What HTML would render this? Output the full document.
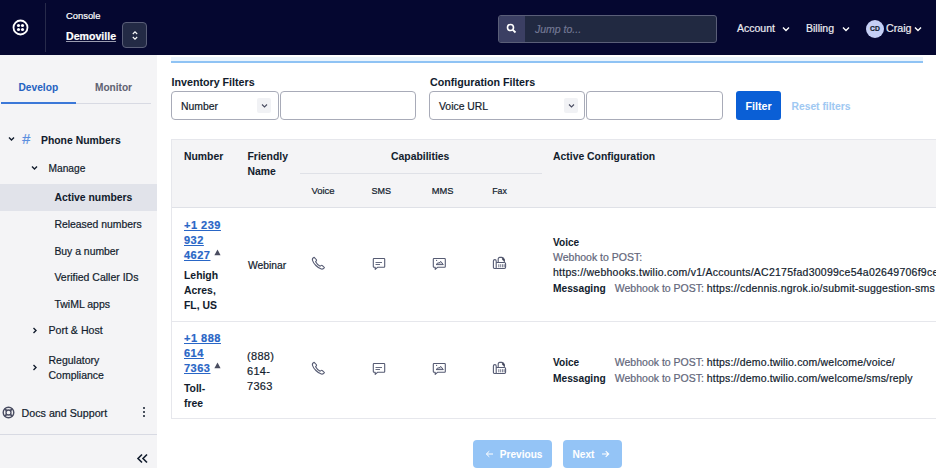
<!DOCTYPE html>
<html><head><meta charset="utf-8">
<style>
*{box-sizing:border-box;margin:0;padding:0}
html,body{width:936px;height:468px;overflow:hidden;background:#fff;font-family:"Liberation Sans",sans-serif;color:#121c2d}
.a{-webkit-text-stroke:0.2px currentColor}
.b{-webkit-text-stroke:0.05px currentColor}
.a{position:absolute;white-space:nowrap}
#hdr{position:absolute;left:0;top:0;width:936px;height:55px;background:#050730}
#side{position:absolute;left:0;top:55px;width:157px;height:413px;background:#f4f4f6}
.t{font-size:10.4px;line-height:15px}
.b{font-weight:bold}
.lk{color:#2966c6;text-decoration:underline;font-weight:bold}
.g{color:#62667a}
</style></head><body>
<div id="hdr">
  <!-- logo -->
  <svg class="a" style="left:11.5px;top:19px" width="17" height="17" viewBox="0 0 17 17">
    <circle cx="8.5" cy="8.5" r="7" fill="none" stroke="#fff" stroke-width="1.8"/>
    <circle cx="6.5" cy="6.5" r="1.55" fill="#fff"/><circle cx="10.5" cy="6.5" r="1.55" fill="#fff"/>
    <circle cx="6.5" cy="10.5" r="1.55" fill="#fff"/><circle cx="10.5" cy="10.5" r="1.55" fill="#fff"/>
  </svg>
  <div class="a" style="left:45px;top:3px;width:1px;height:49px;background:#272a4a"></div>
  <div class="a" style="left:66px;top:9.7px;font-size:9.4px;color:#fff">Console</div>
  <div class="a" style="left:66px;top:29.5px;font-size:10.6px;font-weight:bold;color:#fff;text-decoration:underline;text-decoration-color:#9a9cb0">Demoville</div>
  <div class="a" style="left:122px;top:22px;width:25px;height:26px;border:1px solid #5a5e78;border-radius:4px;background:#232a45"></div>
  <svg class="a" style="left:129.5px;top:28.5px" width="10" height="13" viewBox="0 0 10 13"><path d="M2.8 5 L5 2.8 L7.2 5 M2.8 8 L5 10.2 L7.2 8" fill="none" stroke="#fff" stroke-width="1.1"/></svg>
  <!-- search -->
  <div class="a" style="left:498px;top:15px;width:219px;height:28px;border:1px solid #5a5e78;border-radius:3px;background:#212941"></div>
  <div class="a" style="left:499px;top:16px;width:26px;height:26px;background:#3b3f63;border-radius:2px 0 0 2px"></div>
  <svg class="a" style="left:506px;top:23px" width="11" height="11" viewBox="0 0 11 11"><circle cx="4.5" cy="4.5" r="3" fill="none" stroke="#fff" stroke-width="1.6"/><path d="M6.8 6.8 L9.5 9.5" stroke="#fff" stroke-width="1.8"/></svg>
  <div class="a" style="left:535px;top:23px;font-size:10.5px;font-style:italic;color:#737894">Jump to...</div>
  <div class="a" style="left:737px;top:22px;font-size:10.5px;color:#ececf2">Account</div>
  <svg class="a" style="left:782px;top:26px" width="8" height="6" viewBox="0 0 8 6"><path d="M1 1.5 L4 4.5 L7 1.5" fill="none" stroke="#fff" stroke-width="1.4"/></svg>
  <div class="a" style="left:806px;top:22px;font-size:10.5px;color:#ececf2">Billing</div>
  <svg class="a" style="left:842px;top:26px" width="8" height="6" viewBox="0 0 8 6"><path d="M1 1.5 L4 4.5 L7 1.5" fill="none" stroke="#fff" stroke-width="1.4"/></svg>
  <div class="a" style="left:866px;top:19.5px;width:18px;height:18px;border-radius:50%;background:#c5cff5;color:#121c2d;font-size:6.8px;font-weight:bold;text-align:center;line-height:18px">CD</div>
  <div class="a" style="left:886px;top:22px;font-size:10.7px;color:#ececf2">Craig</div>
  <svg class="a" style="left:914px;top:26px" width="8" height="6" viewBox="0 0 8 6"><path d="M1 1.5 L4 4.5 L7 1.5" fill="none" stroke="#fff" stroke-width="1.4"/></svg>
</div>

<div id="side">
  <div class="a b" style="left:18.5px;top:26.5px;font-size:10.2px;color:#2563c2">Develop</div>
  <div class="a b" style="left:95px;top:26.5px;font-size:10.1px;color:#5f6272">Monitor</div>
  <div class="a" style="left:1px;top:47px;width:75px;height:2px;background:#3b78d8"></div>
  <div class="a" style="left:76px;top:48px;width:75px;height:1px;background:#d8dae3"></div>
  <svg class="a" style="left:8px;top:81px" width="7" height="6" viewBox="0 0 7 6"><path d="M1 1.5 L3.5 4 L6 1.5" fill="none" stroke="#121c2d" stroke-width="1.4"/></svg>
  <div class="a" style="left:22px;top:75.5px;font-size:14.5px;color:#5b8fe0;font-style:italic">#</div>
  <div class="a b t" style="left:41px;top:78px;font-size:10.4px">Phone Numbers</div>
  <svg class="a" style="left:31px;top:110px" width="7" height="6" viewBox="0 0 7 6"><path d="M1 1.5 L3.5 4 L6 1.5" fill="none" stroke="#121c2d" stroke-width="1.4"/></svg>
  <div class="a t" style="left:48.5px;top:106px;font-size:10.2px">Manage</div>
  <div class="a" style="left:0;top:128.5px;width:157px;height:27px;background:#e1e3ea"></div>
  <div class="a b t" style="left:54.4px;top:135px;font-size:10.4px">Active numbers</div>
  <div class="a t" style="left:54.4px;top:162px;font-size:10.4px">Released numbers</div>
  <div class="a t" style="left:54.4px;top:188.5px;font-size:10.4px">Buy a number</div>
  <div class="a t" style="left:54.4px;top:215px;font-size:10.5px">Verified Caller IDs</div>
  <div class="a t" style="left:54.4px;top:242px;font-size:10.5px">TwiML apps</div>
  <svg class="a" style="left:32px;top:272px" width="6" height="7" viewBox="0 0 6 7"><path d="M1.5 1 L4 3.5 L1.5 6" fill="none" stroke="#121c2d" stroke-width="1.4"/></svg>
  <div class="a t" style="left:48.5px;top:268px;font-size:10.6px">Port &amp; Host</div>
  <svg class="a" style="left:32px;top:309px" width="6" height="7" viewBox="0 0 6 7"><path d="M1.5 1 L4 3.5 L1.5 6" fill="none" stroke="#121c2d" stroke-width="1.4"/></svg>
  <div class="a t" style="left:48.5px;top:297.5px;font-size:10.5px;white-space:normal;width:70px">Regulatory<br>Compliance</div>
  <svg class="a" style="left:2px;top:351px" width="13" height="13" viewBox="0 0 13 13"><circle cx="6.5" cy="6.5" r="5.3" fill="none" stroke="#4a4d62" stroke-width="1.4"/><circle cx="6.5" cy="6.5" r="2.5" fill="none" stroke="#4a4d62" stroke-width="1.3"/><path d="M2.8 2.8 L4.7 4.7 M10.2 2.8 L8.3 4.7 M2.8 10.2 L4.7 8.3 M10.2 10.2 L8.3 8.3" stroke="#4a4d62" stroke-width="1.8"/></svg>
  <div class="a t" style="left:21.6px;top:350.5px;font-size:10.7px">Docs and Support</div>
  <div class="a" style="left:142.5px;top:352px;width:2px;height:2px;background:#121c2d;border-radius:1px"></div>
  <div class="a" style="left:142.5px;top:356px;width:2px;height:2px;background:#121c2d;border-radius:1px"></div>
  <div class="a" style="left:142.5px;top:360px;width:2px;height:2px;background:#121c2d;border-radius:1px"></div>
  <div class="a" style="left:0;top:379px;width:157px;height:1px;background:#d8dae3"></div>
  <svg class="a" style="left:136px;top:398px" width="13" height="11" viewBox="0 0 13 11"><path d="M6 1.5 L2 5.5 L6 9.5 M11 1.5 L7 5.5 L11 9.5" fill="none" stroke="#121c2d" stroke-width="1.6"/></svg>
</div>

<div id="main">
  <div class="a" style="left:171px;top:57px;width:752px;height:4px;background:#eaf4fd"></div>
  <div class="a" style="left:171px;top:60.5px;width:752px;height:2px;background:#8fc3f4"></div>
  <div class="a b" style="left:171.5px;top:76px;font-size:10.7px">Inventory Filters</div>
  <div class="a" style="left:171px;top:91px;width:108px;height:29px;border:1px solid #a8abb8;border-radius:4px;background:#fff"></div>
  <div class="a t" style="left:181px;top:99px;font-size:10.4px">Number</div>
  <div class="a" style="left:257px;top:98px;width:14px;height:15px;background:#f1f2f5;border-radius:2px"></div>
  <svg class="a" style="left:260.5px;top:102.5px" width="7" height="6" viewBox="0 0 7 6"><path d="M1 1.5 L3.5 4 L6 1.5" fill="none" stroke="#4a4d62" stroke-width="1.1"/></svg>
  <div class="a" style="left:280px;top:91px;width:136px;height:29px;border:1px solid #a8abb8;border-radius:4px;background:#fff"></div>

  <div class="a b" style="left:430px;top:76px;font-size:10.7px">Configuration Filters</div>
  <div class="a" style="left:429px;top:91px;width:156px;height:29px;border:1px solid #a8abb8;border-radius:4px;background:#fff"></div>
  <div class="a t" style="left:439px;top:99px;font-size:10.4px">Voice URL</div>
  <div class="a" style="left:564px;top:98px;width:14px;height:15px;background:#f1f2f5;border-radius:2px"></div>
  <svg class="a" style="left:567.5px;top:102.5px" width="7" height="6" viewBox="0 0 7 6"><path d="M1 1.5 L3.5 4 L6 1.5" fill="none" stroke="#4a4d62" stroke-width="1.1"/></svg>
  <div class="a" style="left:586px;top:91px;width:137px;height:29px;border:1px solid #a8abb8;border-radius:4px;background:#fff"></div>
  <div class="a" style="left:736px;top:91px;width:45px;height:28.5px;border-radius:3px;background:#0a5fd6"></div>
  <div class="a b t" style="left:745.5px;top:99px;font-size:10.7px;color:#fff">Filter</div>
  <div class="a b t" style="left:791.5px;top:99px;font-size:10.3px;color:#9fc9f3">Reset filters</div>

  <!-- table -->
  <div class="a" style="left:171px;top:139px;width:765px;height:280px;border:1px solid #e6e7ec;border-right:none"></div>
  <div class="a" style="left:172px;top:140px;width:764px;height:67px;background:#f4f4f6"></div>
  <div class="a" style="left:172px;top:207px;width:764px;height:1px;background:#dfe1e7"></div>
  <div class="a" style="left:172px;top:321px;width:764px;height:1px;background:#e6e7ec"></div>
  <div class="a b t" style="left:184px;top:149px;font-size:10.4px">Number</div>
  <div class="a b t" style="left:247.5px;top:149px;font-size:10.4px">Friendly<br>Name</div>
  <div class="a b t" style="left:391px;top:149px;font-size:10.4px">Capabilities</div>
  <div class="a" style="left:299.5px;top:173px;width:242px;height:1px;background:#dfe1e7"></div>
  <div class="a t" style="left:311.4px;top:182.8px;font-size:9.5px">Voice</div>
  <div class="a t" style="left:371.4px;top:183.5px;font-size:9px">SMS</div>
  <div class="a t" style="left:431.7px;top:183.5px;font-size:9.3px">MMS</div>
  <div class="a t" style="left:492.2px;top:183.5px;font-size:8.8px">Fax</div>
  <div class="a b t" style="left:553px;top:149px;font-size:10.4px">Active Configuration</div>

  <!-- row 1 -->
  <div class="a t" style="left:184px;top:217.5px;font-size:11px;letter-spacing:0.5px;white-space:normal;width:60px"><span class="lk">+1 239</span><br><span class="lk">932</span><br><span class="lk">4627</span></div>
  <div class="a b t" style="left:184px;top:268px;font-size:10.4px">Lehigh<br>Acres,<br>FL, US</div>
  <div class="a t" style="left:248px;top:258px;font-size:10.3px">Webinar</div>
  <div class="a b t" style="left:553px;top:235px;font-size:10.1px">Voice</div>
  <div class="a t g" style="left:553px;top:250px;font-size:10.5px">Webhook to POST:</div>
  <div class="a t" style="left:553px;top:265px;font-size:10.5px;letter-spacing:0.25px">https://webhooks.twilio.com/v1/Accounts/AC2175fad30099ce54a02649706f9ce</div>
  <div class="a b t" style="left:553px;top:280.5px;font-size:10.2px">Messaging</div>
  <div class="a t" style="left:614.8px;top:280.5px;font-size:10.5px"><span class="g">Webhook to POST:</span> <span style="letter-spacing:0.2px">https://cdennis.ngrok.io/submit-suggestion-sms</span></div>

  <!-- row 2 -->
  <div class="a t" style="left:184px;top:330.5px;font-size:11px;letter-spacing:0.5px;white-space:normal;width:60px"><span class="lk">+1 888</span><br><span class="lk">614</span><br><span class="lk">7363</span></div>
  <div class="a b t" style="left:184px;top:380.5px;font-size:10.4px">Toll-<br>free</div>
  <div class="a t" style="left:247px;top:349px;font-size:11px;letter-spacing:0.3px">(888)<br>614-<br>7363</div>
  <div class="a b t" style="left:553px;top:355px;font-size:10.1px">Voice</div>
  <div class="a t" style="left:614.8px;top:355px;font-size:10.5px"><span class="g">Webhook to POST:</span> <span style="letter-spacing:0.17px">https://demo.twilio.com/welcome/voice/</span></div>
  <div class="a b t" style="left:553px;top:371px;font-size:10.2px">Messaging</div>
  <div class="a t" style="left:614.8px;top:371px;font-size:10.5px"><span class="g">Webhook to POST:</span> <span style="letter-spacing:0.17px">https://demo.twilio.com/welcome/sms/reply</span></div>


  <!-- icons row1 -->
  <svg class="a ph" style="left:311px;top:256px" width="15" height="15" viewBox="0 0 15 15"><path d="M3.2 1.3 C2 1.8 1 2.8 1.5 4.3 C2.6 7.8 6.5 11.8 10.3 13 C11.6 13.4 12.7 12.6 13.4 11.6 L11.4 9.6 C10.9 9.1 10.3 9.2 9.9 9.6 L9.2 10.2 C7.5 9.4 5.5 7.4 4.6 5.7 L5.2 5 C5.6 4.6 5.7 4 5.2 3.5 Z" fill="none" stroke="#565b73" stroke-width="1.1" stroke-linejoin="round"/></svg>
  <svg class="a" style="left:372px;top:257px" width="14" height="14" viewBox="0 0 14 14"><path d="M2 1.5 H12 Q12.7 1.5 12.7 2.2 V9.6 Q12.7 10.3 12 10.3 H5.5 L3.2 12.3 V10.3 H2 Q1.3 10.3 1.3 9.6 V2.2 Q1.3 1.5 2 1.5 Z" fill="none" stroke="#565b73" stroke-width="1.1" stroke-linejoin="round"/><path d="M3.5 5.5 H10 M3.5 7.5 H8" stroke="#565b73" stroke-width="0.9"/></svg>
  <svg class="a" style="left:432px;top:257px" width="14" height="14" viewBox="0 0 14 14"><path d="M2 1.5 H12.6 Q13.3 1.5 13.3 2.2 V9.6 Q13.3 10.3 12.6 10.3 H5.5 L3.2 12.3 V10.3 H2 Q1.3 10.3 1.3 9.6 V2.2 Q1.3 1.5 2 1.5 Z" fill="none" stroke="#565b73" stroke-width="1.1" stroke-linejoin="round"/><path d="M4 7.6 L6.2 5.6 L6.9 6.2 L8.8 4.4 L11.3 7.6 Z" fill="#c9cbd4" stroke="#565b73" stroke-width="1" stroke-linejoin="round"/><circle cx="4.6" cy="3.4" r="0.6" fill="#565b73"/></svg>
  <svg class="a" style="left:492px;top:256px" width="15" height="14" viewBox="0 0 15 14"><path d="M2.9 3.6 Q4.2 3.6 4.2 4.9 V12.5 H2.6 Q1.4 12.5 1.4 11.3 V4.9 Q1.4 3.6 2.9 3.6 Z" fill="none" stroke="#565b73" stroke-width="1.1"/><path d="M6.2 6.3 V3 Q6.2 1.4 7.8 1.4 H9.8 Q11.2 1.4 12.2 3.2 L12.4 6.3" fill="none" stroke="#565b73" stroke-width="1.1"/><path d="M10.3 2.4 Q11.2 4.2 12.6 4.3" fill="none" stroke="#3a3d52" stroke-width="1.3"/><path d="M4.2 6.5 H12.4 Q13.6 6.5 13.6 7.7 V11.3 Q13.6 12.5 12.4 12.5 H4.2" fill="none" stroke="#565b73" stroke-width="1.1"/><path d="M6.8 8.2 V11.3 M8.7 8.2 V11.3 M10.6 8.2 V11.3 M12.2 8.2 V11.3" stroke="#565b73" stroke-width="0.8"/></svg>

  <!-- icons row2 -->
  <svg class="a ph" style="left:311px;top:361px" width="15" height="15" viewBox="0 0 15 15"><path d="M3.2 1.3 C2 1.8 1 2.8 1.5 4.3 C2.6 7.8 6.5 11.8 10.3 13 C11.6 13.4 12.7 12.6 13.4 11.6 L11.4 9.6 C10.9 9.1 10.3 9.2 9.9 9.6 L9.2 10.2 C7.5 9.4 5.5 7.4 4.6 5.7 L5.2 5 C5.6 4.6 5.7 4 5.2 3.5 Z" fill="none" stroke="#565b73" stroke-width="1.1" stroke-linejoin="round"/></svg>
  <svg class="a" style="left:372px;top:362px" width="14" height="14" viewBox="0 0 14 14"><path d="M2 1.5 H12 Q12.7 1.5 12.7 2.2 V9.6 Q12.7 10.3 12 10.3 H5.5 L3.2 12.3 V10.3 H2 Q1.3 10.3 1.3 9.6 V2.2 Q1.3 1.5 2 1.5 Z" fill="none" stroke="#565b73" stroke-width="1.1" stroke-linejoin="round"/><path d="M3.5 5.5 H10 M3.5 7.5 H8" stroke="#565b73" stroke-width="0.9"/></svg>
  <svg class="a" style="left:432px;top:362px" width="14" height="14" viewBox="0 0 14 14"><path d="M2 1.5 H12.6 Q13.3 1.5 13.3 2.2 V9.6 Q13.3 10.3 12.6 10.3 H5.5 L3.2 12.3 V10.3 H2 Q1.3 10.3 1.3 9.6 V2.2 Q1.3 1.5 2 1.5 Z" fill="none" stroke="#565b73" stroke-width="1.1" stroke-linejoin="round"/><path d="M4 7.6 L6.2 5.6 L6.9 6.2 L8.8 4.4 L11.3 7.6 Z" fill="#c9cbd4" stroke="#565b73" stroke-width="1" stroke-linejoin="round"/><circle cx="4.6" cy="3.4" r="0.6" fill="#565b73"/></svg>
  <svg class="a" style="left:492px;top:361px" width="15" height="14" viewBox="0 0 15 14"><path d="M2.9 3.6 Q4.2 3.6 4.2 4.9 V12.5 H2.6 Q1.4 12.5 1.4 11.3 V4.9 Q1.4 3.6 2.9 3.6 Z" fill="none" stroke="#565b73" stroke-width="1.1"/><path d="M6.2 6.3 V3 Q6.2 1.4 7.8 1.4 H9.8 Q11.2 1.4 12.2 3.2 L12.4 6.3" fill="none" stroke="#565b73" stroke-width="1.1"/><path d="M10.3 2.4 Q11.2 4.2 12.6 4.3" fill="none" stroke="#3a3d52" stroke-width="1.3"/><path d="M4.2 6.5 H12.4 Q13.6 6.5 13.6 7.7 V11.3 Q13.6 12.5 12.4 12.5 H4.2" fill="none" stroke="#565b73" stroke-width="1.1"/><path d="M6.8 8.2 V11.3 M8.7 8.2 V11.3 M10.6 8.2 V11.3 M12.2 8.2 V11.3" stroke="#565b73" stroke-width="0.8"/></svg>
  <svg class="a" style="left:214px;top:248.5px" width="7" height="7" viewBox="0 0 7 7"><path d="M3.5 0.5 L6.6 6.2 H0.4 Z" fill="#4a4d60"/></svg>
  <svg class="a" style="left:214px;top:361.5px" width="7" height="7" viewBox="0 0 7 7"><path d="M3.5 0.5 L6.6 6.2 H0.4 Z" fill="#4a4d60"/></svg>
  <!-- pagination -->
  <div class="a" style="left:473px;top:439.5px;width:79px;height:28px;border-radius:4px;background:#94c4f6"></div>
  <svg class="a" style="left:485px;top:450px" width="9" height="8" viewBox="0 0 9 8"><path d="M8 4 H1.5 M4.3 1.2 L1.3 4 L4.3 6.8" fill="none" stroke="#fff" stroke-width="1"/></svg><div class="a b t" style="left:499.8px;top:446.5px;font-size:10.1px;color:#fff">Previous</div>
  <div class="a" style="left:563px;top:439.5px;width:59px;height:28px;border-radius:4px;background:#94c4f6"></div>
  <div class="a b t" style="left:572.5px;top:446.5px;font-size:10.1px;color:#fff">Next</div><svg class="a" style="left:601px;top:450px" width="9" height="8" viewBox="0 0 9 8"><path d="M1 4 H7.5 M4.7 1.2 L7.7 4 L4.7 6.8" fill="none" stroke="#fff" stroke-width="1.1"/></svg>
</div>
</body></html>
